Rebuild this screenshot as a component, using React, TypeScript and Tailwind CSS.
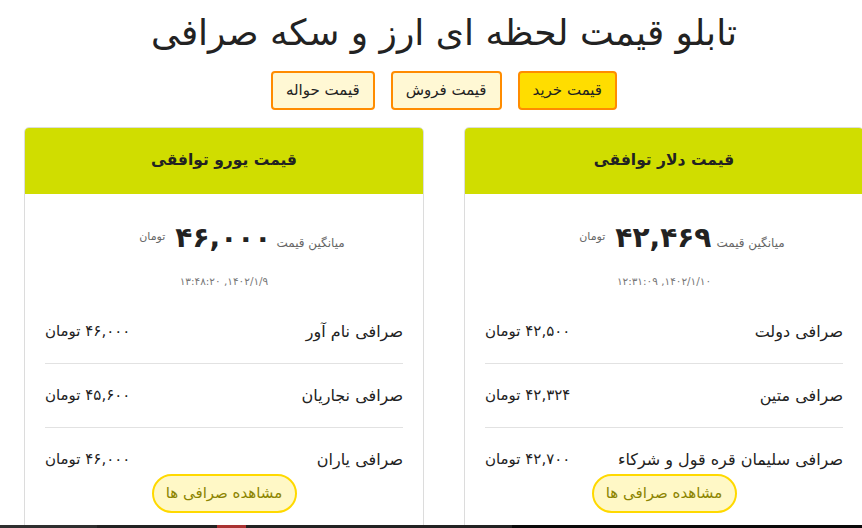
import React from "react";

interface Exchange {
  name: string;
  price: string;
}

interface Board {
  title: string;
  avg: string;
  date: string;
  rows: Exchange[];
}

const boards: Board[] = [
  {
    title: "قیمت دلار توافقی",
    avg: "۴۲,۴۶۹",
    date: "۱۴۰۲/۱/۱۰, ۱۲:۳۱:۰۹",
    rows: [
      { name: "صرافی دولت", price: "۴۲,۵۰۰" },
      { name: "صرافی متین", price: "۴۲,۳۲۴" },
      { name: "صرافی سلیمان قره قول و شرکاء", price: "۴۲,۷۰۰" },
    ],
  },
  {
    title: "قیمت یورو توافقی",
    avg: "۴۶,۰۰۰",
    date: "۱۴۰۲/۱/۹, ۱۳:۴۸:۲۰",
    rows: [
      { name: "صرافی نام آور", price: "۴۶,۰۰۰" },
      { name: "صرافی نجاریان", price: "۴۵,۶۰۰" },
      { name: "صرافی یاران", price: "۴۶,۰۰۰" },
    ],
  },
];

const tabs = ["قیمت خرید", "قیمت فروش", "قیمت حواله"];

const PriceCard: React.FC<{ board: Board }> = ({ board }) => {
  return (
    <article className="w-[400px] shrink-0 border border-[#dcdcdc] rounded-t-[5px] bg-white">
      <div className="h-[66px] bg-[#d0dd00] rounded-t-[4px] flex items-center justify-center">
        <h2 className="text-[15.5px] font-bold text-[#222]">{board.title}</h2>
      </div>
      <div className="px-5">
        <div className="pt-6 pe-9 flex items-end justify-center h-[64px]">
          <span className="text-[12px] text-[#666] mb-[6px]">میانگین قیمت</span>
          <span className="ms-[5px] me-[10px] text-[28px] font-bold tracking-[-0.05em] text-[#222] leading-[40px]">
            {board.avg}
          </span>
          <span className="text-[11px] text-[#666] self-start mt-[11px]">تومان</span>
        </div>
        <p className="mt-[15px] text-center text-[10.5px] text-[#777] leading-4">{board.date}</p>
        <ul className="mt-[11px]">
          {board.rows.map((row, i) => (
            <li
              key={row.name}
              className={`flex justify-between items-center text-[#222] leading-[23px] ${
                i < board.rows.length - 1 ? "py-5 border-b border-[#e2e2e2]" : "pt-5 pb-0"
              }`}
            >
              <span className="text-[16px]">{row.name}</span>
              <span className="text-[15px]">{row.price} تومان</span>
            </li>
          ))}
        </ul>
        <div className="flex justify-center mt-[3px]">
          <button className="h-[39px] w-[145px] rounded-full border-2 border-[#ffd900] bg-[#fff8c6] text-[15px] text-[#8c8400]">
            مشاهده صرافی ها
          </button>
        </div>
        <div className="h-10" />
      </div>
    </article>
  );
};

export default function App() {
  return (
    <div
      dir="ltr"
      className="w-[862px] h-[528px] overflow-hidden flex flex-col bg-white"
      style={{ fontFamily: '"DejaVu Sans", "Noto Sans", sans-serif' }}
    >
      <div className="flex-1 overflow-hidden">
        <main dir="rtl" className="w-[888px] flex flex-col items-center">
          <h1 className="mt-[7px] text-[36px] leading-[52px] text-[#222]">
            تابلو قیمت لحظه ای ارز و سکه صرافی
          </h1>
          <div className="mt-[12px] flex gap-[16px]">
            {tabs.map((t, i) => (
              <button
                key={t}
                className={`h-[39px] px-[13px] rounded-[4px] border-2 border-[#ff8c00] text-[15px] text-[#222] ${
                  i === 0 ? "bg-[#ffdd00]" : "bg-[#fff8d4]"
                }`}
              >
                {t}
              </button>
            ))}
          </div>
          <div className="mt-[17px] flex gap-10">
            {boards.map((b) => (
              <PriceCard key={b.title} board={b} />
            ))}
          </div>
        </main>
      </div>
      <div className="h-[3px] flex shrink-0">
        <div className="w-[97px] bg-[#2f2f2f]" />
        <div className="w-[120px] bg-[#222]" />
        <div className="w-[29px] bg-[#a83232]" />
        <div className="w-[266px] bg-[#222]" />
        <div className="flex-1 bg-[#0a0a0a]" />
      </div>
    </div>
  );
}
